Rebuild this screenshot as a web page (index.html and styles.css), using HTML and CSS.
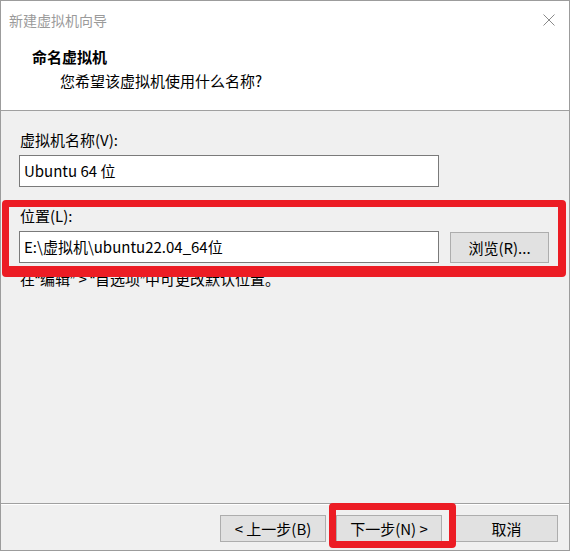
FILE: index.html
```html
<!DOCTYPE html>
<html lang="zh-CN">
<head>
<meta charset="utf-8">
<title>新建虚拟机向导</title>
<link rel="stylesheet" href="styles.css">
</head>
<body>
<div class="window">
  <div class="titlebar">
    <span class="title">新建虚拟机向导</span>
    <svg class="close" width="12" height="12" viewBox="0 0 12 12"><path d="M0.5 0.5 L11.5 11.5 M11.5 0.5 L0.5 11.5" stroke="#8a8a8a" stroke-width="1" fill="none"/></svg>
  </div>
  <div class="header">
    <div class="h-title">命名虚拟机</div>
    <div class="h-sub">您希望该虚拟机使用什么名称?</div>
  </div>
  <div class="content">
    <div class="label label-first">虚拟机名称(V):</div>
    <div class="input input-name">Ubuntu 64 位</div>
    <div class="label label-loc">位置(L):</div>
    <div class="loc-row">
      <div class="input input-loc">E:\虚拟机\ubuntu22.04_64位</div>
      <div class="btn btn-browse">浏览(R)...</div>
    </div>
    <div class="hint">在<span class="q">“</span>编辑<span class="q">”</span> &gt; <span class="q">“</span>首选项<span class="q">”</span>中可更改默认位置。</div>
  </div>
  <div class="footer">
    <div class="btn btn-nav btn-back">&lt; 上一步(B)</div>
    <div class="btn btn-nav btn-next">下一步(N) &gt;</div>
    <div class="btn btn-nav btn-cancel">取消</div>
  </div>
  <div class="mark mark-loc"></div>
  <div class="mark mark-next"></div>
</div>
</body>
</html>
```

FILE: styles.css
```css
* { box-sizing: border-box; }
html, body { margin: 0; padding: 0; background: #ffffff; }
body {
  font-family: "Segoe UI", "Noto Sans CJK SC", sans-serif;
  font-size: 15px;
  color: #000000;
}
.window {
  position: relative;
  width: 570px;
  height: 551px;
  border: 1px solid #9c9c9c;
  background: #f0f0f0;
  display: flex;
  flex-direction: column;
  overflow: hidden;
}
.titlebar {
  height: 37px;
  background: #ffffff;
  display: flex;
  align-items: center;
  justify-content: space-between;
  padding: 0 14px 0 8px;
}
.title {
  font-size: 14px;
  color: #9a9a9a;
  line-height: 20px;
  margin-top: 1px;
}
.close { display: block; margin-top: 1px; }
.header {
  height: 73px;
  background: #ffffff;
  border-bottom: 1px solid #a0a0a0;
  padding: 9px 0 0 31px;
}
.h-title {
  font-weight: bold;
  line-height: 20px;
}
.h-sub {
  line-height: 20px;
  margin-top: 4px;
  padding-left: 28px;
}
.content {
  flex: 1;
  padding: 19px 11px 0 18px;
}
.label { line-height: 20px; padding-left: 1px; }
.label-loc { margin-top: 19px; }
.input {
  background: #ffffff;
  border: 1px solid #7a7a7a;
  height: 32px;
  padding: 0 4px;
  display: flex;
  align-items: center;
  line-height: 20px;
  margin-top: 5px;
}
.input-name { width: 420px; }
.loc-row {
  display: flex;
  align-items: flex-start;
  gap: 11px;
}
.input-loc { width: 420px; margin-top: 5px; }
.btn {
  background: #e1e1e1;
  border: 1px solid #adadad;
  display: flex;
  align-items: center;
  justify-content: center;
  line-height: 20px;
}
.btn-browse {
  width: 99px;
  height: 31px;
  margin-top: 6px;
}
.hint {
  line-height: 20px;
  margin-top: 6px;
  padding-left: 1px;
}
.q { font-family: "Liberation Sans", sans-serif; }
.footer {
  height: 47px;
  border-top: 1px solid #a0a0a0;
  box-shadow: inset 0 1px 0 #ffffff;
  display: flex;
  justify-content: flex-end;
  align-items: flex-start;
  padding: 11px 11px 0 0;
}
.btn-nav { width: 106px; height: 27px; }
.btn-back { margin-right: 10px; }
.btn-next { margin-right: 13px; }
.btn-cancel { width: 103px; }
.mark {
  position: absolute;
  border: 7px solid #ec1c24;
  border-radius: 4px;
}
.mark-loc {
  left: 1px;
  top: 199px;
  width: 564px;
  height: 77px;
  border-width: 7px 8px 11px 7px;
}
.mark-next {
  left: 328px;
  top: 502px;
  width: 127px;
  height: 45px;
}
```
